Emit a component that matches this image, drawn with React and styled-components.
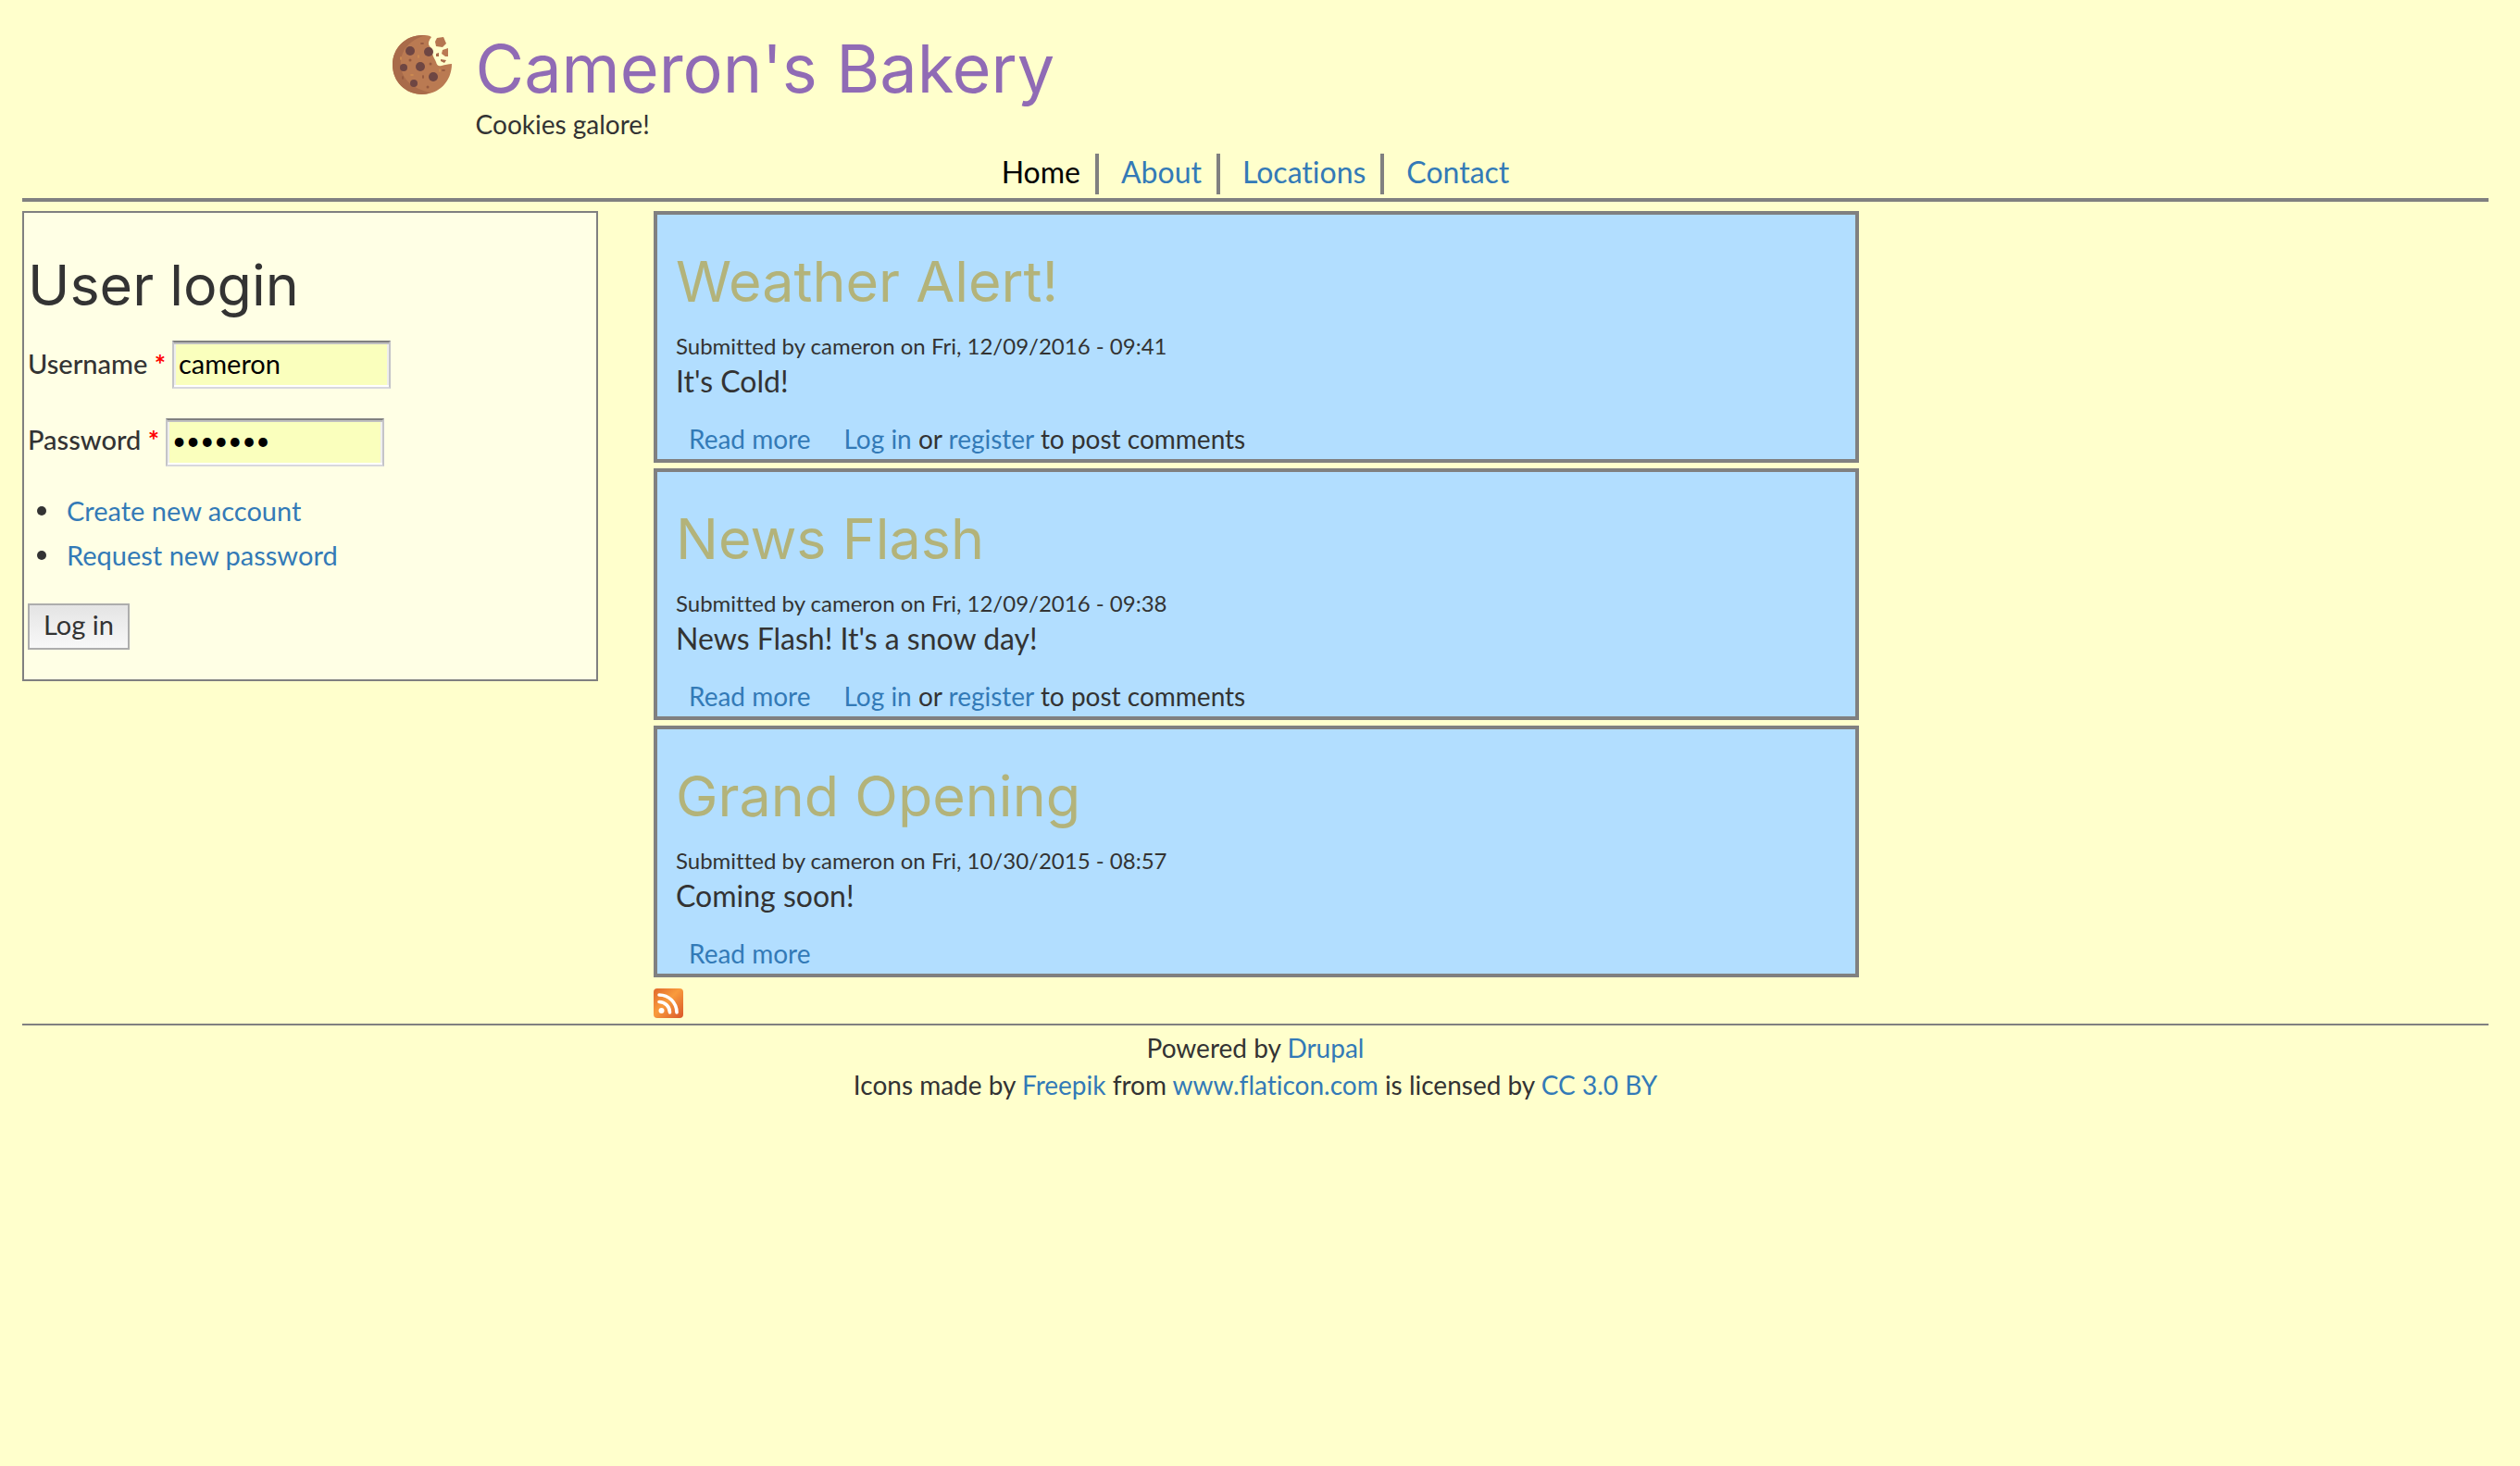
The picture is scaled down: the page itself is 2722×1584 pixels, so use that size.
import React from "react";
import styled, { createGlobalStyle } from "styled-components";

const GlobalStyle = createGlobalStyle`
  *, *::before, *::after { box-sizing: border-box; }
  body {
    margin: 0;
    background: #ffffcc;
    color: #333333;
    font-family: "Lato", "Liberation Sans", sans-serif;
    font-size: 28px;
    line-height: 40px;
    font-variant-ligatures: none;
  }
`;

const headingFont = `"Inter", "Liberation Sans", sans-serif`;

const Page = styled.div`
  padding: 34px 34px 40px 24px;
`;

const Link = styled.a`
  color: #337ab7;
  text-decoration: none;
  &:hover { text-decoration: underline; }
`;

const Header = styled.header`
  display: flex;
  align-items: flex-start;
  gap: 26px;
  padding-left: 15%;
`;

const LogoLink = styled.a`
  display: block;
  padding-top: 4px;
  svg { display: block; width: 64px; height: 64px; }
`;

const SiteName = styled.h1`
  margin: 0;
  font: 400 72px/80px ${headingFont};
  a { color: #906bb5; text-decoration: none; }
`;

const Slogan = styled.div`
  line-height: 40px;
`;

const Nav = styled.nav`
  margin-top: 12px;
  padding-bottom: 4px;
  border-bottom: 4px solid #808080;
`;

const Menu = styled.ul`
  display: flex;
  justify-content: center;
  gap: 8px;
  margin: 0;
  padding: 0;
  list-style: none;
`;

const MenuItem = styled.li`
  padding: 0 16px 4px;
  font-size: 32px;
  line-height: 40px;
  border-right: 4px solid #808080;
  &:last-child { border-right: 0; }
`;

const MenuLink = styled(Link)`
  color: ${(p) => (p.$active ? "#000000" : "#337ab7")};
`;

const Columns = styled.div`
  display: grid;
  grid-template-columns: 311fr 651fr 310fr;
  column-gap: 60px;
  align-items: start;
  padding: 10px 0 6px;
`;

const LoginBlock = styled.aside`
  padding: 40px 4px 32px;
  border: 2px solid #808080;
  background: #ffffe5;
  font-size: 29px;
`;

const BlockTitle = styled.h2`
  margin: 0 0 22px;
  font: 400 61px/76px ${headingFont};
`;

const Fields = styled.div`
  display: grid;
  gap: 32px;
  margin-bottom: 24px;
`;

const Field = styled.div`
  display: flex;
  align-items: baseline;
  gap: 7px;
`;

const Label = styled.label`
  font-weight: 500;
  span { color: #ff0000; font-weight: 700; }
`;

const TextInput = styled.input`
  width: 236px;
  height: 52px;
  padding: 0 5px 4px;
  border: 2px solid;
  border-color: #808080 #c4c4c8 #d8d8dc #c4c4c8;
  border-radius: 0;
  background: #faffbd;
  box-shadow:
    inset 0 2px #c0c0c0,
    inset 0 -2px #ffffff,
    inset 2px 0 #eeeeee,
    inset -2px 0 #eeeeee;
  color: #000000;
  font: inherit;
  &[type="password"] { font-size: 26px; }
`;

const AccountLinks = styled.ul`
  margin: 0 0 28px;
  padding-left: 10px;
  list-style: none;
  li {
    display: flex;
    align-items: center;
    gap: 22px;
    line-height: 48px;
  }
  li::before {
    content: "";
    width: 10px;
    height: 10px;
    border-radius: 50%;
    background: #333333;
  }
`;

const SubmitButton = styled.button`
  display: block;
  height: 50px;
  padding: 0 15px 4px;
  border: 2px solid #adadad;
  border-radius: 0;
  background: linear-gradient(#e4e4e4, #f8f8f8);
  color: #333333;
  font: inherit;
`;

const Feed = styled.main`
  display: flex;
  flex-direction: column;
  gap: 6px;
`;

const Article = styled.article`
  padding: 34px 20px 2px;
  border: 4px solid #808080;
  background: #b2deff;
`;

const ArticleTitle = styled.h2`
  margin: 0 0 14px;
  font: 400 61px/76px ${headingFont};
  a { color: #b3b37a; text-decoration: none; }
`;

const Submitted = styled.div`
  font-size: 24px;
  line-height: 36px;
`;

const Body = styled.p`
  margin: 0 0 22px;
  font-size: 32px;
  line-height: 40px;
`;

const NodeLinks = styled.ul`
  display: flex;
  gap: 36px;
  margin: 0;
  padding: 0 14px;
  list-style: none;
`;

const FeedIcon = styled.a`
  display: block;
  width: 32px;
  margin-top: 6px;
  svg { display: block; width: 32px; height: 32px; }
`;

const Footer = styled.footer`
  padding-top: 4px;
  border-top: 2px solid #808080;
  text-align: center;
  p { margin: 0; }
`;

function Cookie() {
  return (
    <svg viewBox="0 0 64 64" role="img" aria-label="Home">
      <path
        d="M32 0C36 0 39 0 42 2C39 6 38 9 40 12C42 14 44 16 43 20C44 24 46 26 47 29C48 33 50 34 53 33C57 32 60 31 64 31C64 50 50 64 32 64C14 64 0 50 0 32S14 0 32 0Z"
        fill="#ba7a52"
      />
      <path
        d="M32 0C14 0 0 14 0 32S14 64 32 64C36 64 38 63 41 62C22 58 10 48 9 33C8 17 18 5 36 0Z"
        fill="#a96b4a"
      />
      <path d="M48 3L55 2L58 9L54 13L47 12L46 7Z" fill="#b57650" />
      <path d="M54 16L60 14L60 23L57 23L53 20Z" fill="#ba7a52" />
      <path d="M47 20L50 19L50 23L47 23Z" fill="#a96b4a" />
      <path d="M52 26L58 27L56 30L52 28Z" fill="#a96b4a" />
      <g fill="#6e4643">
        <circle cx="19" cy="17" r="5" />
        <circle cx="39" cy="18" r="5" />
        <circle cx="30" cy="34" r="5" />
        <circle cx="12" cy="35" r="4" />
        <circle cx="44" cy="45" r="5" />
        <circle cx="23" cy="52" r="4" />
      </g>
      <g fill="#95593f">
        <ellipse cx="32" cy="9" rx="2" ry="1" />
        <circle cx="19" cy="27" r="1.5" />
        <circle cx="41" cy="31" r="1.5" />
        <ellipse cx="33" cy="45" rx="1" ry="2" />
        <circle cx="38" cy="56" r="1.5" />
        <ellipse cx="55" cy="38" rx="2" ry="1" />
        <ellipse cx="11" cy="46" rx="1" ry="2" />
      </g>
      <g fill="#cc8a52">
        <ellipse cx="9" cy="25" rx="1" ry="2" />
        <ellipse cx="28" cy="23" rx="1" ry="2" />
        <ellipse cx="21" cy="43" rx="2" ry="1" />
        <ellipse cx="51" cy="38" rx="1" ry="2" />
      </g>
    </svg>
  );
}

function RssIcon() {
  return (
    <svg viewBox="0 0 32 32" role="img" aria-label="Subscribe">
      <defs>
        <linearGradient id="rss" x1="0" y1="0" x2="1" y2="1">
          <stop offset="0" stopColor="#e0672c" />
          <stop offset="0.45" stopColor="#f99b3c" />
          <stop offset="1" stopColor="#d9562a" />
        </linearGradient>
      </defs>
      <rect width="32" height="32" rx="4" fill="url(#rss)" />
      <circle cx="8.5" cy="24" r="3" fill="#fff" />
      <path
        d="M6 14.5A11.5 11.5 0 0 1 17.5 26M6 7A19 19 0 0 1 25 26"
        fill="none"
        stroke="#fff"
        strokeWidth="3.6"
        strokeLinecap="round"
      />
    </svg>
  );
}

const menu = ["Home", "About", "Locations", "Contact"];

const posts = [
  { title: "Weather Alert!", date: "Fri, 12/09/2016 - 09:41", body: "It's Cold!", comments: true },
  { title: "News Flash", date: "Fri, 12/09/2016 - 09:38", body: "News Flash! It's a snow day!", comments: true },
  { title: "Grand Opening", date: "Fri, 10/30/2015 - 08:57", body: "Coming soon!", comments: false },
];

function LoginField({ id, label, ...input }) {
  return (
    <Field>
      <Label htmlFor={id}>
        {label} <span>*</span>
      </Label>
      <TextInput id={id} {...input} />
    </Field>
  );
}

function Post({ title, date, body, comments }) {
  return (
    <Article>
      <ArticleTitle><a href="#">{title}</a></ArticleTitle>
      <Submitted>Submitted by cameron on {date}</Submitted>
      <Body>{body}</Body>
      <NodeLinks>
        <li><Link href="#">Read more</Link></li>
        {comments && (
          <li>
            <Link href="#">Log in</Link> or <Link href="#">register</Link> to post comments
          </li>
        )}
      </NodeLinks>
    </Article>
  );
}

export default function App() {
  return (
    <>
      <GlobalStyle />
      <Page>
        <Header>
          <LogoLink href="#"><Cookie /></LogoLink>
          <div>
            <SiteName><a href="#">Cameron's Bakery</a></SiteName>
            <Slogan>Cookies galore!</Slogan>
          </div>
        </Header>
        <Nav>
          <Menu>
            {menu.map((item, i) => (
              <MenuItem key={item}>
                <MenuLink href="#" $active={i === 0}>{item}</MenuLink>
              </MenuItem>
            ))}
          </Menu>
        </Nav>
        <Columns>
          <LoginBlock>
            <BlockTitle>User login</BlockTitle>
            <form onSubmit={(e) => e.preventDefault()}>
              <Fields>
                <LoginField id="name" label="Username" type="text" defaultValue="cameron" />
                <LoginField id="pass" label="Password" type="password" defaultValue="cookies" />
              </Fields>
              <AccountLinks>
                <li><Link href="#">Create new account</Link></li>
                <li><Link href="#">Request new password</Link></li>
              </AccountLinks>
              <SubmitButton type="submit">Log in</SubmitButton>
            </form>
          </LoginBlock>
          <Feed>
            {posts.map((post) => <Post key={post.title} {...post} />)}
            <FeedIcon href="#"><RssIcon /></FeedIcon>
          </Feed>
        </Columns>
        <Footer>
          <p>Powered by <Link href="#">Drupal</Link></p>
          <p>
            Icons made by <Link href="#">Freepik</Link> from <Link href="#">www.flaticon.com</Link> is
            licensed by <Link href="#">CC 3.0 BY</Link>
          </p>
        </Footer>
      </Page>
    </>
  );
}
